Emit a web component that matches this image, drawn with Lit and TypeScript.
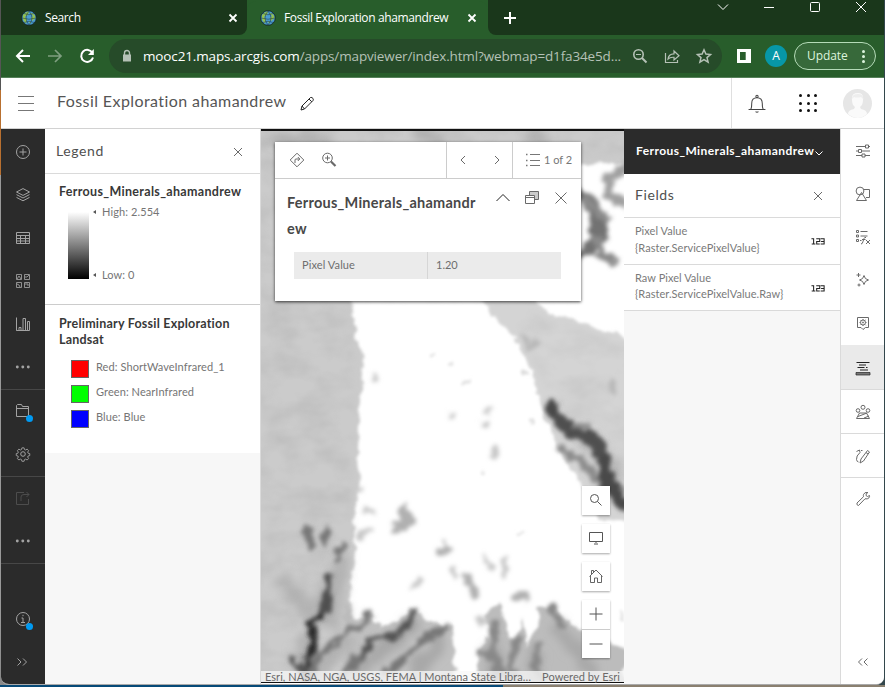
import { LitElement, html, css, svg, type SVGTemplateResult } from "lit";
import { customElement, property } from "lit/decorators.js";
import { classMap } from "lit/directives/class-map.js";

const glyphs: Record<string, SVGTemplateResult> = {
  add: svg`<circle cx="8" cy="8" r="6.5"/><path d="M8 4.5v7M4.5 8h7"/>`,
  layers: svg`<path d="M8 1.6 14.5 5 8 8.400 1.500 5zM1.500 7.600 8 11l6.500-3.400M1.500 10.400 8 13.800l6.500-3.400"/>`,
  table: svg`<path d="M1.500 2.500h13v11h-13zM1.500 5.500h13M1.500 8.500h13M1.500 11h13M5.500 5.500v8M10.500 5.500v8"/>`,
  basemap: svg`<path d="M1.500 1.500h5v5h-5zM9.500 1.500h5v5h-5zM1.500 9.500h5v5h-5zM9.500 9.500h5v5h-5zM2 6l2-3 2 3M10 4h2l2-2M2 11l2 1 1 2M10 11h3v2" stroke-width=".85"/>`,
  chart: svg`<path d="M1.500 1.500v13h2.500v-3h2v3h2v-12h2.500v12h2v-9h2v9M1.500 14.500h13"/>`,
  dots: svg`<g fill="currentColor" stroke="none"><circle cx="2.300" cy="8" r="1.450"/><circle cx="7.800" cy="8" r="1.450"/><circle cx="13.300" cy="8" r="1.450"/></g>`,
  folder: svg`<path d="M1.500 13.500v-11l1-1h4l1 2h6v10zM1.500 5.500h12"/>`,
  gear: svg`<circle cx="8" cy="8" r="2.300"/><path d="M6.800 1.500h2.400l.5 1.900 1.200.5 1.700-1 1.600 1.700-1 1.700.4 1.100 1.900.5v2.200l-1.900.5-.4 1.100 1 1.700-1.600 1.600-1.700-1-1.200.5-.5 1.900H6.800l-.5-1.900-1.200-.5-1.700 1-1.600-1.600 1-1.700-.4-1.100-1.900-.5V7.900l1.900-.5.4-1.100-1-1.700 1.600-1.700 1.700 1 1.200-.5z" transform="translate(.8 .5) scale(.9)"/>`,
  share: svg`<path d="M9 2.500H1.500v12h12V9M6 11V7q0-2.500 3-2.500h5M11.500 2l2.500 2.500L11.500 7"/>`,
  info: svg`<circle cx="8" cy="8" r="6.500"/><path d="M8 3.800v1.400M6.500 7h1.500v4.500M6 11.500h4"/>`,
  expand: svg`<path d="M2.500 4.500 6 8l-3.500 3.500M8 4.500 11.500 8 8 11.500"/>`,
  collapse: svg`<path d="M7 4.500 3.500 8 7 11.500M12.500 4.500 9 8l3.500 3.500"/>`,
  sliders: svg`<path d="M1 3.500h9.500M13.500 3.500h1.500M10.500 2h3v3h-3zM1 8h2.500M6.500 8H15M3.500 6.500h3v3h-3zM1 12.500h6M10 12.500h5M7 11h3v3H7z"/>`,
  styles: svg`<circle cx="5" cy="5" r="3.900"/><path d="M9 3.500h5.500v8H11M6.500 6.500l5 8h-10z" fill="none"/>`,
  labelfx: svg`<path d="M1.500 1.500h2v2h-2zM1.500 6h2v2h-2zM1.500 10.500h2v2h-2zM5.500 2.500h7M5.500 7h7M5 11.500h1.500M6 15q1.500 0 2-2.500l1-3q.5-1.500 2-1M7 10.500h3.500M11 11l4 4M15 11l-4 4"/>`,
  sparkle: svg`<path d="M9 3.500q.6 3.900 4.500 4.500Q9.600 8.600 9 12.500 8.400 8.600 4.500 8 8.400 7.400 9 3.500zM3.500 1v4M1.500 3h4M4 11.500v3M2.500 13h3"/>`,
  popup: svg`<path d="M2.500 2.500h11v10h-3L8 14.500 6 12.500H2.500z"/><circle cx="8" cy="7.500" r="2.500"/><circle cx="8" cy="7.500" r=".6"/><path d="M8 4v1M8 10v1M4.500 7.500h1M10.500 7.500h1M5.500 5l.8.8M10 9.500l.8.8M10.500 5l-.8.8M5.500 10l.8-.8"/>`,
  fields: svg`<path d="M1.500 2.500h13M4 5h7M2.500 7.500h7M11 7.500h1.500M5 10h8" /><path d="M1 12.500h14v2.500H1z" fill="#777" stroke-width=".7"/>`,
  charts2: svg`<circle cx="8" cy="3.300" r="2"/><circle cx="3" cy="6.500" r="1.800"/><circle cx="13" cy="6.500" r="1.800"/><path d="M4.500 9h7l3 5.500h-13zM3 12.500l9-3.500M9 14l5-2"/>`,
  sketch: svg`<path d="m12.500 2.500 2 1.500-6 9-3.500 2 1-4zM11 4.500l2 1.500M1.500 3.500 4.500 2M4.500 2 5 4.500Q1 8 1.500 11.500 2 14 3.500 14M6 2.500h1.500"/>`,
  wrench: svg`<path d="M14.500 4.500 12.500 5.500l-1.500-1 .3-2L13 1.500q-3.500-.8-4.500 2-.3 1 0 2.200L2 12q-.8 2 1.500 2.500L10 7.800q2.500.6 4-1 .8-1 .5-2.300z"/>`,
  close: svg`<path d="m4 4 8 8M12 4l-8 8"/>`,
  closeBig: svg`<path d="m2.500 2.500 11 11M13.500 2.500l-11 11"/>`,
  menu: svg`<path d="M0 1.500h16M0 8.500h16M0 15.500h16"/>`,
  pencil: svg`<path d="m2 14 1-4 8.500-8.500q1.500-.5 2.700 1.200.3 1-.2 1.800L5.500 13zM10 3l2.800 2.800M3 10l2.500 3"/>`,
  bell: svg`<path d="M.5 12.800h15M2.500 12.500q.8-1 .8-5 0-5 4.700-5t4.700 5q0 4 .8 5M6.700 14.800q1.300 1 2.600 0" stroke-width=".9"/><circle cx="8" cy="1.300" r="1" stroke-width=".9"/>`,
  directions: svg`<path d="m8 1.200 6.800 6.800L8 14.800 1.200 8zM6 11V8q0-1 1-1h3.500M8.800 5l2 2-2 2"/>`,
  zoomin: svg`<circle cx="6.500" cy="6" r="4.800"/><path d="M6.500 3.500v5M4 6h5"/><path d="m10 9.500 4.500 4.500" stroke-width="2.200"/>`,
  prev: svg`<path d="M10 4 6 8l4 4"/>`,
  next: svg`<path d="m6 4 4 4-4 4"/>`,
  list: svg`<path d="M5 2.500h10M5 8.500h10M5 13.500h10"/><path d="M1 2.500h1.500M1 8.500h1.500M1 13.500h1.500" stroke-width="1.500"/>`,
  up: svg`<path d="m1.500 11 6.500-6.500 6.500 6.500"/>`,
  down: svg`<path d="m4.500 6.500 3.500 3.500 3.500-3.500"/>`,
  dock: svg`<path d="M5.500 5V1.500h9v8h-4" fill="#ccc"/><path d="M1.500 5.500h9v8h-9zM1.500 7.500h9" fill="#fff"/>`,
  search: svg`<circle cx="6.500" cy="6.500" r="4"/><path d="m9.500 9.500 4 4"/>`,
  monitor: svg`<path d="M1.500 2.500h13v9h-13zM6 14h4M8 12v1"/>`,
  home: svg`<path d="m1.500 8.500 6.500-6.500 6.500 6.500M2.500 8v6.500h4V10h3v4.500h4V8M3.500 6V2.500h2v1.800" stroke-width=".9"/>`,
  plus: svg`<path d="M8 1.500v13M1.500 8h13"/>`,
  minus: svg`<path d="M1.500 8h13"/>`,
  back: svg`<path d="M15 8H2M8 2 2 8l6 6" stroke-width="2"/>`,
  forward: svg`<path d="M1 8h13M8 2l6 6-6 6" stroke-width="1.700"/>`,
  reload: svg`<path d="M13.500 5A6 6 0 1 0 14 9.500" stroke-width="2"/><path d="M14.800 1v6H9z" fill="currentColor" stroke="none"/>`,
  lock: svg`<path d="M5.500 7V5a2.500 2.500 0 0 1 5 0v2" stroke-width="1.400"/><path d="M4 6.500h8v7H4z" fill="currentColor" stroke="none"/>`,
  zoomout: svg`<circle cx="6.500" cy="6.500" r="4.700" stroke-width="1.600"/><path d="M4 6.500h5" /><path d="m10 10 4.500 4.500" stroke-width="1.900"/>`,
  send: svg`<path d="M1.500 5v9.500h12V12M4 11q.5-5 6-5.200V3l5 4.700-5 4.300V9.300Q6 9 4 11z" stroke-width="1.200"/>`,
  star: svg`<path d="m8 1.800 1.900 4.300 4.600.4L11 9.600l1.100 4.600L8 11.700l-4.100 2.500L5 9.600 1.500 6.500l4.600-.4z" stroke-width="1.500"/>`,
  panel: svg`<path d="M1 1h14v14H1zM4 4v8h5.700V4z" fill="currentColor" fill-rule="evenodd" stroke="none"/>`,
  tabClose: svg`<path d="m4.500 4.500 7 7M11.500 4.500l-7 7" stroke-width="1.800"/>`,
  tabAdd: svg`<path d="M8 2v12M2 8h12" stroke-width="2"/>`,
  winDown: svg`<path d="m3 5.500 5 5 5-5"/>`,
  winMin: svg`<path d="M3 8.500h10"/>`,
  winMax: svg`<rect x="3.500" y="3.500" width="9" height="9" rx="1"/>`,
  winClose: svg`<path d="m3 3 10 10M13 3 3 13"/>`,
  globe: svg`<circle cx="8" cy="8" r="7.300" fill="#4a9bd0" stroke="#10201c" stroke-width=".8"/><path d="M2 5q3-4 6-3.500L7 5 4 6.500l2 3-1 4Q1 10 2 5zM9 3q5 0 5.500 5L11 11l-1-3 2-2zM8 11l2 1-1 2z" fill="#93c152" stroke="none"/><path d="M3 3.500q5 2.500 10 0M1 8q7 2.500 14 0M3 12.500q5-2.500 10 0M8 1Q2 8 8 15M8 1q6 7 0 14" stroke="#173040" stroke-width=".5"/>`,
  numeric: svg`<path d="M.5 5.500H3v6M.8 11.500H5M6 5.500h4v3H6.500v3H10M11 5.500h4v6h-4M11.500 8.500H15" stroke-width="1.200"/>`,
};

@customElement("ui-icon")
class UiIcon extends LitElement {
  @property() name = "add";
  static styles = css`
    :host { display: inline-flex; width: 16px; height: 16px; flex: none; }
    svg { width: 100%; height: 100%; overflow: visible; fill: none; stroke: currentColor; stroke-width: 1; }
  `;
  render() {
    return html`<svg viewBox="0 0 16 16">${glyphs[this.name]}</svg>`;
  }
}

@customElement("browser-chrome")
class BrowserChrome extends LitElement {
  static styles = css`
    :host { display: block; font-family: "Open Sans", "Noto Sans", sans-serif; color: #fff; }
    .tabs { height: 35px; background: #1a371b; display: flex; }
    .tab { display: flex; align-items: center; height: 35px; font-size: 12px; box-sizing: border-box; white-space: nowrap; }
    .tab span { flex: 1; margin-left: 8px; letter-spacing: -.38px; }
    .first { width: 246px; padding: 0 6px 0 20px; border-radius: 0 0 8px 0; background: #1a371b; }
    .active { width: 241px; padding: 0 8px 1px 13px; background: #285d2b; border-radius: 9px 9px 0 0; margin-top: 1px; height: 34px; }
    .rest { flex: 1; background: #1a371b; border-radius: 0 0 0 8px; display: flex; justify-content: space-between; }
    .rest .new { margin: 10px 0 0 14px; }
    .controls { display: flex; gap: 30px; margin-right: 15px; margin-top: -1px; }
    .base { display: flex; flex: 1; background: #285d2b; }
    .bar { height: 42px; background: #285d2b; border-bottom: 1px solid #56815a; display: flex; align-items: center; }
    .back { margin-left: 14px; }
    .fwd { margin-left: 16px; color: #7f9f80; }
    .rel { margin-left: 16px; }
    .address { margin-left: 14px; width: 613px; height: 34px; border-radius: 17px; background: #264b29; display: flex; align-items: center; box-sizing: border-box; padding: 0 10px; color: #b5c1b6; font-size: 13.500px; }
    .address p { margin: 0 0 0 8px; width: 489px; white-space: nowrap; letter-spacing: -.14px; }
    .address b { font-weight: 400; color: #fff; }
    .address .gap { margin-left: 16px; }
    .panel { margin-left: 14px; }
    .avatar { margin-left: 13px; width: 22px; height: 22px; border-radius: 50%; background: #0797a7; font-size: 12px; line-height: 22px; text-align: center; }
    .update { margin-left: 7px; width: 82px; height: 28px; border: 1px solid #b5dbb8; border-radius: 15px; background: #37693a; font-size: 12px; line-height: 26px; box-sizing: border-box; padding-left: 12px; display: flex; color: #dcf4dd; letter-spacing: -.1px; }
    .kebab { margin-left: 14px; width: 3px; display: flex; flex-direction: column; gap: 2px; justify-content: center; }
    .kebab i { width: 3px; height: 3px; border-radius: 50%; background: #dcf4dd; }
  `;
  render() {
    return html`
      <div class="tabs">
        <div class="base">
          <div class="tab first"><ui-icon name="globe"></ui-icon><span>Search</span><ui-icon name="tabClose"></ui-icon></div>
          <div class="tab active"><ui-icon name="globe"></ui-icon><span>Fossil Exploration ahamandrew</span><ui-icon name="tabClose"></ui-icon></div>
          <div class="rest">
            <ui-icon class="new" name="tabAdd"></ui-icon>
            <div class="controls">${["winDown", "winMin", "winMax", "winClose"].map((n) => html`<ui-icon name=${n}></ui-icon>`)}</div>
          </div>
        </div>
      </div>
      <div class="bar">
        <ui-icon class="back" name="back"></ui-icon><ui-icon class="fwd" name="forward"></ui-icon><ui-icon class="rel" name="reload"></ui-icon>
        <div class="address">
          <ui-icon name="lock"></ui-icon>
          <p><b>mooc21.maps.arcgis.com</b>/apps/mapviewer/index.html?webmap=d1fa34e5d...</p>
          <ui-icon name="zoomout"></ui-icon><ui-icon class="gap" name="send"></ui-icon><ui-icon class="gap" name="star"></ui-icon>
        </div>
        <ui-icon class="panel" name="panel"></ui-icon>
        <div class="avatar">A</div>
        <div class="update">Update<div class="kebab"><i></i><i></i><i></i></div></div>
      </div>`;
  }
}

@customElement("raster-map")
class RasterMap extends LitElement {
  static styles = css`
    :host { display: block; height: 100%; }
    svg { display: block; width: 363px; height: 554px; }
  `;
  render() {
    return html`<svg viewBox="261 129 363 554" preserveAspectRatio="none">
      <defs>
        <filter id="soft" x="-5%" y="-5%" width="110%" height="110%">
          <feTurbulence type="fractalNoise" baseFrequency=".09" numOctaves="2" seed="4" result="t"/>
          <feDisplacementMap in="SourceGraphic" in2="t" xChannelSelector="R" yChannelSelector="G" scale="11"/>
          <feGaussianBlur stdDeviation="1.700"/>
        </filter>
        <filter id="veins" x="-5%" y="-5%" width="110%" height="110%">
          <feTurbulence type="fractalNoise" baseFrequency=".11" numOctaves="2" seed="9" result="t"/>
          <feDisplacementMap in="SourceGraphic" in2="t" xChannelSelector="R" yChannelSelector="G" scale="14"/>
          <feGaussianBlur stdDeviation="2.200"/>
        </filter>
        <filter id="shade" x="-5%" y="-5%" width="110%" height="110%">
          <feTurbulence type="fractalNoise" baseFrequency=".09" numOctaves="2" seed="21" result="t"/>
          <feDisplacementMap in="SourceGraphic" in2="t" xChannelSelector="R" yChannelSelector="G" scale="22"/>
          <feGaussianBlur stdDeviation="4"/>
        </filter>
        <filter id="grain" x="0" y="0" width="100%" height="100%">
          <feTurbulence type="fractalNoise" baseFrequency=".03 .045" numOctaves="3" seed="12"/>
          <feColorMatrix values="0 0 0 0 .4  0 0 0 0 .4  0 0 0 0 .4  1.400 0 0 0 -.5" result="n"/>
          <feGaussianBlur in="SourceAlpha" stdDeviation="3" result="s"/>
          <feComposite in="n" in2="s" operator="in"/>
        </filter>
      </defs>
      <rect x="261" y="129" width="363" height="554" fill="#fff"/>
      <g filter="url(#soft)">
        <path fill="#cbcbcb" d="M250 120H635V163L585 165 560 170 350 300 357 340 364 350 360 400 358 450 359 480 354 520 355 550 350 606 354 640V690H250z"/>
        <path fill="#d4d4d4" d="M475 290H520L550 313 588 325 635 340V520H600L585 488 563 457 543 417 541 400 528 362 514 338 494 318z"/>
        <path fill="#c0c0c0" d="M345 690V602L357 622 370 612 380 628 398 622 412 607 425 618 440 625 452 628 456 690z"/>
        <path fill="#bcbcbc" d="M478 655 490 632 484 615 499 602 508 635 518 640 522 618 528 650 538 618 535 610 553 606 562 614 571 625 590 634 624 648V690H475z"/>
      </g>
      <g filter="url(#shade)" fill="none" stroke-linecap="round">
        <path stroke="#b4b4b4" stroke-width="16" d="M325 590 300 660M285 580 305 610M345 640 300 690M340 560 330 620"/>
        <path stroke="#a8a8a8" stroke-width="15" d="M415 625 380 650 350 680M495 650v30M535 650v30M560 630l30 40M440 640 410 680"/>
        <path stroke="#b0b0b0" stroke-width="12" d="M263 140H330M420 134 440 140M530 135 545 140"/>
        <path stroke="#bababa" stroke-width="16" d="M585 440 618 475"/>
      </g>
      <path filter="url(#grain)" opacity=".5" fill="#000" d="M250 120H635V156H575V300H346L354 340 352 600 354 615V690H250z"/>
      <path filter="url(#grain)" opacity=".3" fill="#000" d="M510 305 635 345V510L590 475 550 395 532 360z"/>
      <g filter="url(#veins)" fill="none" stroke-linecap="round" stroke-linejoin="round">
        <path stroke="#505050" stroke-width="14" d="M552 407 562 424 576 434 590 436 603 456 608 480 624 505"/>
        <path stroke="#4a4a4a" stroke-width="13" d="M554 407v3M604 462 606 485 624 503"/>
        <path stroke="#8c8c8c" stroke-width="8" d="M563 448 580 460 596 480M575 427 586 424"/>
        <path stroke="#727272" stroke-width="13" d="M583 196 594 210 598 240 584 254M594 206 602 232"/>
        <path stroke="#8a8a8a" stroke-width="9" d="M596 240 602 254 614 262M585 200l20 18"/>
        <path stroke="#a0a0a0" stroke-width="10" d="M628 166 608 180 607 194 624 203"/>
        <path stroke="#505050" stroke-width="8" d="M330 578 327 600 324 612 312 624 314 645 305 672"/>
        <path stroke="#2c2c2c" stroke-width="7" d="M321 616 311 626 312 648 304 668"/>
        <path stroke="#555" stroke-width="7" d="M415 612 408 626 395 634 372 641 360 658M292 660l16 18"/>
        <path stroke="#777" stroke-width="7" d="M358 655 340 680M366 612l2 8-25 16-24 20-8 20M385 675l45-40 14-6M345 543 336 560M326 530l-3 14M306 528l6 16"/>
        <path stroke="#888" stroke-width="7" d="M494 625v28l3 24M478 652l16 6 12 18M519 640 511 660l4 18M538 645l-3 20 8 14M552 608l10 18"/>
        <path stroke="#b0b0b0" stroke-width="9" d="M402 508 406 520M396 528 412 522M440 552l8-4M466 576 470 584 477 596M515 598l10-2"/>
        <path stroke="#c8c8c8" stroke-width="6" d="M365 512h7M360 536l10-6M486 558l5 10M504 560v16M452 570l2 6M412 588l6-6M489 410v2M484 425l4-2M495 449v9M449 415l3 1M374 376v3M352 495l7-5M482 618v6"/>
        <path stroke="#b8b8b8" stroke-width="6" d="M522 335 530 350 538 340M613 382v10"/>
      </g>
      <g filter="url(#soft)" stroke="#dcdcdc" stroke-width="2.500"><path d="M430 355h5M449 363h5M462 381h10M515 534l12-2M530 421h4M482 471h3M620 610l4 12M522 372h5"/></g>
      <path fill="#f7f7f7" opacity=".78" d="M261 671h363v11H261z"/>
      <path fill="#111" d="M261 129h363v2H261zM261 682h363v1.500H261z"/>
    </svg>`;
  }
}

@customElement("map-popup")
class MapPopup extends LitElement {
  static styles = css`
    :host { display: block; width: 306px; height: 159px; background: #fff; box-shadow: 0 1px 3px rgba(0,0,0,.75); color: #323232; }
    .bar { display: flex; height: 37px; box-sizing: border-box; border-bottom: 1px solid #ccc; color: #6a6a6a; }
    .bar > div { display: flex; align-items: center; box-sizing: border-box; border-left: 1px solid #ccc; }
    .bar .tools { width: 171px; border: 0; padding-left: 14px; gap: 16px; }
    .pager { width: 66px; gap: 18px; padding-left: 8px; }
    .bar .count { flex: 1; padding: 0 0 1px 12px; gap: 3px; font-size: 11px; white-space: nowrap; color: #777; }
    .head { display: flex; padding-left: 12px; }
    h2 { margin: 11px 0 0; width: 196px; height: 51px; font: 700 14.500px/26px Lato, sans-serif; letter-spacing: .25px; overflow-wrap: anywhere; color: #484848; }
    .actions { display: flex; gap: 13px; margin: 11px 0 0 12px; color: #6a6a6a; }
    .actions .up { color: #222; }
    .row { margin: 11px 20px 0 19px; height: 27px; display: flex; background: #ebebeb; font-size: 11px; line-height: 26px; color: #6e6e6e; }
    .row div { padding-left: 8px; }
    .row .k { width: 125px; border-right: 1px solid #d6d6d6; letter-spacing: .1px; }
  `;
  render() {
    return html`
      <div class="bar">
        <div class="tools"><ui-icon name="directions"></ui-icon><ui-icon name="zoomin"></ui-icon></div>
        <div class="pager"><ui-icon name="prev"></ui-icon><ui-icon name="next"></ui-icon></div>
        <div class="count"><ui-icon name="list"></ui-icon>1 of 2</div>
      </div>
      <div class="head"><h2>Ferrous_Minerals_ahamandrew</h2>
        <div class="actions"><ui-icon class="up" name="up"></ui-icon><ui-icon name="dock"></ui-icon><ui-icon name="closeBig"></ui-icon></div></div>
      <div class="row"><div class="k">Pixel Value</div><div>1.20</div></div>`;
  }
}

type RailItem = { icon: string; dot?: boolean; dim?: boolean; on?: boolean; line?: boolean };

@customElement("app-root")
class AppRoot extends LitElement {
  static styles = css`
    :host { display: block; width: 885px; height: 687px; overflow: hidden; background: linear-gradient(90deg, #074a78 503px, #8a8070 503px); font-family: Lato, sans-serif; color: #404040; }
    .desk { height: 685px; padding: 0 1px; background: linear-gradient(90deg, transparent 50%, #33474c 50%), linear-gradient(#555 0 90px, #b87030 90px 175px, #999 175px 620px, #888); }
    .window { width: 883px; height: 684px; background: #fff; overflow: hidden; border-radius: 0 0 8px 8px; border-bottom: 1px solid #aaa; box-sizing: content-box; }
    header { height: 51px; box-sizing: border-box; border-bottom: 1px solid #d2d2d2; display: flex; align-items: center; }
    header .menu { margin-left: 17px; color: #777; }
    header h1 { margin: -5px 0 0 23px; font-size: 16px; font-weight: 400; width: 230px; white-space: nowrap; letter-spacing: .41px; color: #555; }
    header .edit { margin: 2px 0 0 12px; color: #222; }
    .account { margin-left: auto; height: 50px; width: 152px; border-left: 1px solid #dfdfdf; display: flex; align-items: center; color: #444; }
    .account .bell { margin: 1px 0 0 16px; width: 18px; height: 18px; }
    .apps { display: grid; grid-template-columns: repeat(3, 3px); gap: 4.500px; margin-left: 33px; }
    .apps i { width: 3px; height: 3px; border-radius: 50%; background: #111; }
    .face { margin-left: 26px; width: 29px; height: 29px; }
    main { display: flex; height: 555px; }
    .rail { width: 44px; flex: none; display: flex; flex-direction: column; box-sizing: border-box; }
    .rail.dark { background: #2b2b2b; color: #a3a3a3; padding-top: 2px; }
    .dark .group { border-bottom: 1px solid #474747; }
    .btn { height: 43px; display: flex; align-items: center; justify-content: center; position: relative; padding: 0 1px 2px 0; box-sizing: border-box; }
    .btn.dim { color: #4d4d4d; }
    .dot { position: absolute; left: 25px; top: 25px; width: 7px; height: 7px; border-radius: 50%; background: #009af2; }
    .bottom { margin-top: auto; }
    .rail.light { border-left: 1px solid #dadada; background: #fff; color: #6a6a6a; padding-top: 1px; }
    .light .btn { padding-right: 0; }
    .light .btn.on { background: #eaeaea; color: #222; }
    .light .btn.line { height: 44px; border-bottom: 1px solid #dadada; padding: 1px 0 0; }
    .light .btn.on { height: 45px; }
    .legend { width: 215px; background: #f7f7f7; border-right: 1px solid #dadada; }
    .title { height: 45px; box-sizing: border-box; background: #fff; border-bottom: 1px solid #dadada; display: flex; align-items: center; justify-content: space-between; padding: 0 14px 2px 11px; font-size: 14px; letter-spacing: .6px; color: #505050; }
    .title ui-icon { margin-top: 4px; color: #6a6a6a; }
    .block { background: #fff; padding-left: 14px; }
    .block.a { height: 130px; border-bottom: 1px solid #ccc; }
    .block.b { height: 148px; }
    h3 { margin: 0; font-size: 12.500px; font-weight: 700; line-height: 16px; color: #383838; letter-spacing: .32px; }
    .a h3 { padding-top: 10px; }
    .b h3 { padding-top: 11px; width: 190px; letter-spacing: .22px; }
    .ramp { display: flex; margin: 12px 0 0 9px; }
    .ramp .bar { width: 21px; height: 67px; background: linear-gradient(#fff, #000); }
    .ends { display: flex; flex-direction: column; justify-content: space-between; margin: -7px 0 -3px 4px; font-size: 11px; line-height: 14px; color: #757575; letter-spacing: .1px; }
    .ends div { display: flex; align-items: center; gap: 6px; }
    .ends i { border: 2px solid transparent; border-left: 0; border-right: 3px solid #555; }
    .swatch { display: flex; align-items: center; height: 25px; padding-left: 12px; font-size: 11px; color: #757575; line-height: 14px; }
    .swatch i { width: 16px; height: 16px; border: 1px solid #666; margin-right: 7px; }
    .swatch span { margin-top: -3px; letter-spacing: .08px; }
    .swatches { margin-top: 8px; }
    .red { background: #f00; } .green { background: #0f0; } .blue { background: #00f; }
    .map { width: 363px; position: relative; overflow: hidden; }
    map-popup { position: absolute; left: 14px; top: 13px; }
    .tools { position: absolute; right: 14px; top: 357px; display: flex; flex-direction: column; gap: 9px; color: #555; }
    .tool { width: 28px; background: #fff; box-shadow: 0 1px 2px rgba(0,0,0,.35); }
    .tool div { height: 29px; box-sizing: border-box; padding-bottom: 1px; display: flex; align-items: center; justify-content: center; }
    .tool div + div { border-top: 1px solid #ccc; }
    .credit { position: absolute; left: 4px; right: 4px; bottom: 1px; display: flex; justify-content: space-between; font-size: 11px; line-height: 12px; white-space: nowrap; color: #6a6a6a; letter-spacing: .04px; }
    .fields { width: 216px; background: #f7f7f7; }
    .layer { height: 45px; background: #2b2b2b; color: #fff; display: flex; align-items: center; font-weight: 700; font-size: 12px; padding-left: 12px; letter-spacing: .43px; box-sizing: border-box; padding-bottom: 3px; }
    .layer ui-icon { margin: 5px 0 0 -3px; }
    .fields .title { height: 44px; padding-bottom: 3px; }
    .field { height: 46px; background: #fff; border-bottom: 1px solid #dadada; display: flex; justify-content: space-between; align-items: center; padding: 0 15px 3px 11px; font-size: 11px; line-height: 16.500px; color: #7a7a7a; box-sizing: border-box; letter-spacing: .04px; }
    .field.tall { height: 47px; }
    .field ui-icon { width: 14px; height: 14px; color: #222; margin-top: 3px; }
  `;

  private top: RailItem[] = [{ icon: "add" }, { icon: "layers" }, { icon: "table" }, { icon: "basemap" }, { icon: "chart" }, { icon: "dots" }];
  private right: RailItem[] = [
    { icon: "sliders" }, { icon: "styles" }, { icon: "labelfx" }, { icon: "sparkle" }, { icon: "popup" },
    { icon: "fields", on: true, line: true }, { icon: "charts2", line: true }, { icon: "sketch", line: true }, { icon: "wrench" },
  ];

  private btn(i: RailItem) {
    return html`<div class=${classMap({ btn: true, dim: !!i.dim, on: !!i.on, line: !!i.line })}><ui-icon name=${i.icon}></ui-icon>${i.dot ? html`<i class="dot"></i>` : ""}</div>`;
  }

  render() {
    return html`<div class="desk"><div class="window">
      <browser-chrome></browser-chrome>
      <header>
        <ui-icon class="menu" name="menu"></ui-icon>
        <h1>Fossil Exploration ahamandrew</h1>
        <ui-icon class="edit" name="pencil"></ui-icon>
        <div class="account">
          <ui-icon class="bell" name="bell"></ui-icon>
          <div class="apps">${Array.from({ length: 9 }, () => html`<i></i>`)}</div>
          <svg class="face" viewBox="0 0 29 29"><circle cx="14.500" cy="14.500" r="14.500" fill="#e6e6e6"/><path fill="#fafafa" d="M9 11q-1-7 6-7 6 0 5 7 0 5-3 7l1 2q6 1 6 5-9 8-19 0 0-4 6-5l1-2q-3-2-3-7z"/><path d="M9 10q0-5 6-5t5 5l-2-2q-4 1-7 0z" fill="#eee"/></svg>
        </div>
      </header>
      <main>
        <nav class="rail dark">
          <div class="group">${this.top.map((i) => this.btn(i))}</div>
          <div class="group">${this.btn({ icon: "folder", dot: true })}${this.btn({ icon: "gear" })}</div>
          <div class="group">${this.btn({ icon: "share", dim: true })}${this.btn({ icon: "dots" })}</div>
          <div class="bottom">${this.btn({ icon: "info", dot: true })}${this.btn({ icon: "expand" })}</div>
        </nav>
        <section class="legend">
          <div class="title"><span>Legend</span><ui-icon name="close"></ui-icon></div>
          <div class="block a">
            <h3>Ferrous_Minerals_ahamandrew</h3>
            <div class="ramp"><div class="bar"></div><div class="ends"><div><i></i>High: 2.554</div><div><i></i>Low: 0</div></div></div>
          </div>
          <div class="block b">
            <h3>Preliminary Fossil Exploration Landsat</h3>
            <div class="swatches">
              <div class="swatch"><i class="red"></i><span>Red: ShortWaveInfrared_1</span></div>
              <div class="swatch"><i class="green"></i><span>Green: NearInfrared</span></div>
              <div class="swatch"><i class="blue"></i><span>Blue: Blue</span></div>
            </div>
          </div>
        </section>
        <section class="map">
          <raster-map></raster-map>
          <map-popup></map-popup>
          <div class="tools">
            <div class="tool"><div><ui-icon name="search"></ui-icon></div></div>
            <div class="tool"><div><ui-icon name="monitor"></ui-icon></div></div>
            <div class="tool"><div><ui-icon name="home"></ui-icon></div></div>
            <div class="tool"><div><ui-icon name="plus"></ui-icon></div><div><ui-icon name="minus"></ui-icon></div></div>
          </div>
          <div class="credit"><span>Esri, NASA, NGA, USGS, FEMA | Montana State Libra…</span><span>Powered by Esri</span></div>
        </section>
        <section class="fields">
          <div class="layer">Ferrous_Minerals_ahamandrew<ui-icon name="down"></ui-icon></div>
          <div class="title"><span>Fields</span><ui-icon name="close"></ui-icon></div>
          <div class="field tall"><div>Pixel Value<br>{Raster.ServicePixelValue}</div><ui-icon name="numeric"></ui-icon></div>
          <div class="field"><div>Raw Pixel Value<br>{Raster.ServicePixelValue.Raw}</div><ui-icon name="numeric"></ui-icon></div>
        </section>
        <nav class="rail light">
          ${this.right.map((i) => this.btn(i))}
          <div class="bottom">${this.btn({ icon: "collapse" })}</div>
        </nav>
      </main>
    </div></div>`;
  }
}
